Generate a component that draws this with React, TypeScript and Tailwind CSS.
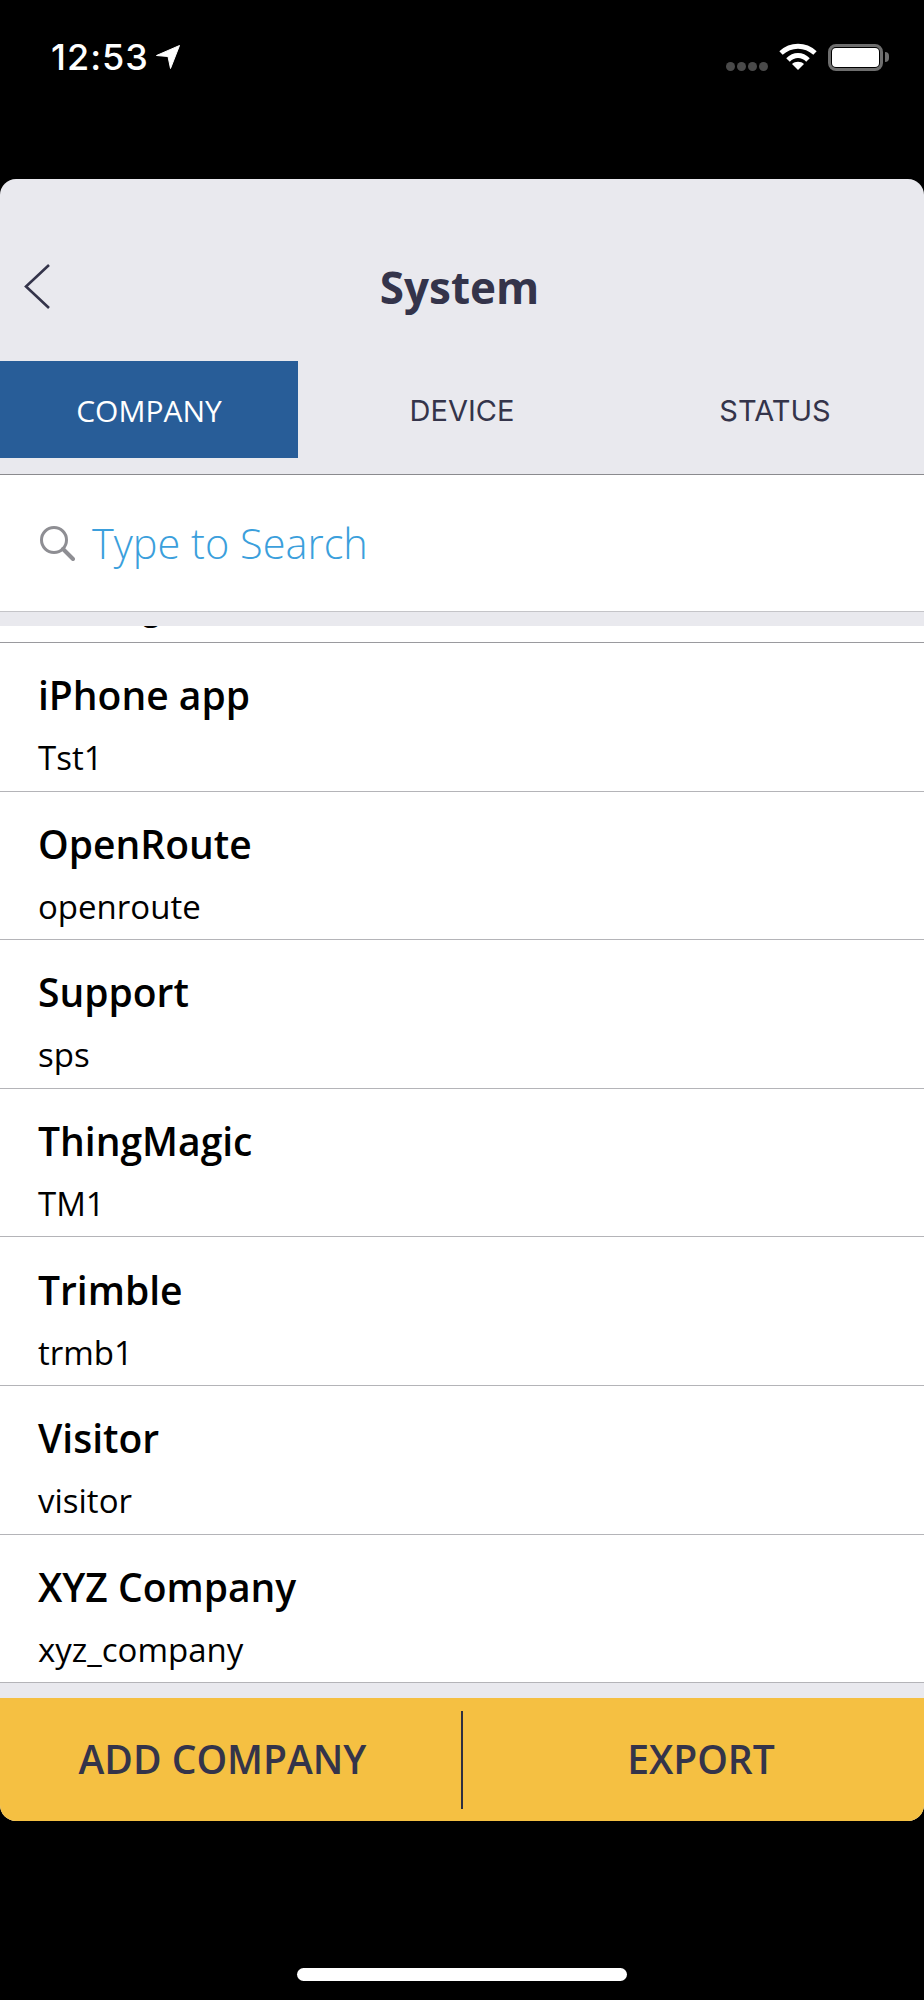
const companies = [
  { name: "iPhone app", code: "Tst1" },
  { name: "OpenRoute", code: "openroute" },
  { name: "Support", code: "sps" },
  { name: "ThingMagic", code: "TM1" },
  { name: "Trimble", code: "trmb1" },
  { name: "Visitor", code: "visitor" },
  { name: "XYZ Company", code: "xyz_company" },
];

const StatusBar = () => (
  <div className="flex h-[179px] items-start justify-between bg-black pt-[38px] pr-[35px] pl-[51px] text-white">
    <div className="flex items-center gap-[7px]">
      <span className="font-['Inter',sans-serif] text-[36px] leading-[38px] font-medium tracking-[1px]">12:53</span>
      <svg width="24" height="24" viewBox="0 0 24 24" fill="white">
        <path d="M23.5 0.5 L0.5 10.5 L12 11.5 L14.5 23.5 Z" stroke="white" strokeLinejoin="round" />
      </svg>
    </div>
    <div className="flex items-center gap-[11px] pt-[5px]">
      <div className="mt-[19px] flex gap-[2px]">
        <span className="h-[9px] w-[9px] rounded-full bg-[#4a4a4a]" />
        <span className="h-[9px] w-[9px] rounded-full bg-[#4a4a4a]" />
        <span className="h-[9px] w-[9px] rounded-full bg-[#4a4a4a]" />
        <span className="h-[9px] w-[9px] rounded-full bg-[#4a4a4a]" />
      </div>
      <svg width="38" height="28" viewBox="0 0 38 28" fill="none" stroke="white" strokeWidth="5">
        <path d="M2 10 C12 1 26 1 36 10" />
        <path d="M9 17 C15 11 23 11 29 17" />
        <path d="M19 27 L13 21 C16 18 22 18 25 21 Z" fill="white" stroke="none" />
      </svg>
      <div className="flex items-center">
        <div className="flex h-[27px] w-[55px] rounded-[8px] border-[3px] border-[#6e6e6e] p-[1px]">
          <div className="h-full w-full rounded-[4px] bg-white" />
        </div>
        <div className="ml-[2px] h-[10px] w-[4px] rounded-r-full bg-[#6e6e6e]" />
      </div>
    </div>
  </div>
);

const App = () => {
  return (
    <div className="flex h-[2000px] w-[924px] flex-col bg-black font-['Open_Sans',sans-serif]">
      <StatusBar />
      <div className="flex h-[1642px] flex-col overflow-hidden rounded-[16px] bg-[#e9e9ee]">
        {/* Header */}
        <div className="relative flex h-[182px] items-center justify-center pt-[34px] pr-[5px]">
          <svg className="absolute top-[85px] left-[24px]" width="26" height="45" viewBox="0 0 26 45" fill="none" stroke="#34344a" strokeWidth="2.6">
            <path d="M25 1 L2 22.5 L25 44" />
          </svg>
          <h1 className="text-[44px] leading-[54px] font-bold text-[#34344a]">System</h1>
        </div>
        {/* Tabs */}
        <div className="flex h-[97px] items-center">
          <div className="flex h-full w-[298px] items-center justify-center bg-[#285d98] pt-[1px] text-[30px] font-medium text-white">COMPANY</div>
          <div className="flex h-full flex-1 items-center justify-center pt-[2px] font-['Inter',sans-serif] text-[29px] text-[#34344a]">DEVICE</div>
          <div className="flex h-full w-[298px] items-center justify-center pt-[2px] font-['Inter',sans-serif] text-[29px] text-[#34344a]">STATUS</div>
        </div>
        <div className="mt-[16px] h-[1px] bg-[#8a8a8e]" />
        {/* Search */}
        <div className="flex h-[137px] items-center gap-[17px] border-b border-[#c4c4c8] bg-white pl-[39px]">
          <svg width="36" height="36" viewBox="0 0 36 36" fill="none" stroke="#8e8e93" strokeWidth="3">
            <circle cx="15" cy="15" r="12.5" />
            <path d="M24 24 L34 34" strokeLinecap="round" strokeWidth="4" />
          </svg>
          <span className="text-[41.5px] leading-[54px] font-light text-[#3b9fdc]">Type to Search</span>
        </div>
        <div className="h-[14px]" />
        {/* List */}
        <div className="bg-white">
          <div className="h-[17px] overflow-hidden border-b border-[#9a9a9e] pl-[38px]">
            <div className="-mt-[38px] text-[33px] leading-[40px] tracking-[-0.4px] text-black">Training,</div>
          </div>
          {companies.map((c) => (
            <div key={c.name} className="flex h-[148.6px] flex-col justify-center border-b border-[#b4b4b8] pt-[15px] pl-[38px] text-black">
              <div className="text-[39px] leading-[50px] font-semibold">{c.name}</div>
              <div className="mt-[18px] text-[33px] leading-[40px]">{c.code}</div>
            </div>
          ))}
        </div>
        <div className="h-[15px]" />
        {/* Actions */}
        <div className="flex flex-1 items-center bg-[#f5c042] text-[39px] font-semibold text-[#34344a]">
          <div className="flex w-[461px] justify-center pr-[16px]">ADD COMPANY</div>
          <div className="h-[98px] w-[2px] bg-[#2f2f40]" />
          <div className="flex w-[461px] justify-center pl-[15px]">EXPORT</div>
        </div>
      </div>
      {/* Home indicator */}
      <div className="flex flex-1 items-end justify-center pb-[19px]">
        <div className="h-[13px] w-[330px] rounded-full bg-white" />
      </div>
    </div>
  );
};

export default App;
